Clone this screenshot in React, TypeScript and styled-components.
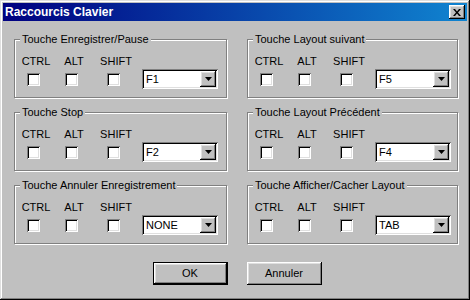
import React from "react";
import styled, { createGlobalStyle } from "styled-components";

const Global = createGlobalStyle`
  html, body { margin: 0; padding: 0; background: #c0c0c0; }
  body { font-family: "Liberation Sans", Arial, sans-serif; font-size: 11px; color: #000; }
  * { box-sizing: border-box; }
`;

const raised = `
  box-shadow: inset -1px -1px 0 #000, inset 1px 1px 0 #fff,
    inset -2px -2px 0 #808080, inset 2px 2px 0 #dfdfdf;
`;
const sunken = `
  box-shadow: inset 1px 1px 0 #808080, inset -1px -1px 0 #fff,
    inset 2px 2px 0 #000, inset -2px -2px 0 #dfdfdf;
`;

const Window = styled.div`
  width: 470px;
  height: 300px;
  background: #c0c0c0;
  padding: 3px;
  display: flex;
  flex-direction: column;
  box-shadow: inset -1px -1px 0 #000, inset 1px 1px 0 #dfdfdf,
    inset -2px -2px 0 #808080, inset 2px 2px 0 #fff;
`;

const TitleBar = styled.div`
  flex: none;
  height: 18px;
  background: linear-gradient(to right, #000080, #1084d0);
  display: flex;
  align-items: center;
  justify-content: space-between;
  padding: 0 2px;
`;

const Title = styled.span`
  color: #fff;
  font-weight: bold;
  font-size: 12px;
  line-height: 14px;
`;

const CloseButton = styled.div`
  width: 16px;
  height: 14px;
  background: #c0c0c0;
  display: flex;
  align-items: center;
  justify-content: center;
  ${raised}
`;

const Body = styled.div`
  flex: 1;
  display: flex;
  flex-direction: column;
  padding: 18px 9px 0 11px;
`;

const Columns = styled.div`
  display: grid;
  grid-template-columns: 213px 211px;
  column-gap: 20px;
`;

const Column = styled.div`
  display: flex;
  flex-direction: column;
  gap: 14px;
`;

const Group = styled.div`
  position: relative;
  height: 59px;
  border: 1px solid #808080;
  box-shadow: inset 1px 1px 0 #fff, 1px 1px 0 #fff;
  padding: 15px 0 0 2px;
`;

const Caption = styled.span`
  position: absolute;
  top: -7px;
  left: 5px;
  padding: 0 2px;
  background: #c0c0c0;
  line-height: 13px;
  white-space: nowrap;
`;

const Row = styled.div`
  display: flex;
  align-items: flex-end;
`;

const KeyCol = styled.div<{ $w: number }>`
  width: ${(p) => p.$w}px;
  display: flex;
  flex-direction: column;
  align-items: center;
  gap: 1px;
`;

const KeyLabel = styled.span`
  line-height: 13px;
  height: 13px;
`;

const BoxSlot = styled.div`
  height: 20px;
  display: flex;
  align-items: center;
`;

const Check = styled.div`
  width: 13px;
  height: 13px;
  background: #fff;
  margin-right: 5px;
  ${sunken}
`;

const Combo = styled.div`
  width: 76px;
  height: 20px;
  margin-left: 3px;
  background: #fff;
  display: flex;
  align-items: center;
  justify-content: space-between;
  padding: 2px 2px 2px 4px;
  ${sunken}
`;

const ComboText = styled.span`
  line-height: 13px;
`;

const DropButton = styled.div`
  width: 16px;
  height: 16px;
  background: #c0c0c0;
  display: flex;
  align-items: center;
  justify-content: center;
  ${raised}
`;

const Footer = styled.div`
  display: flex;
  justify-content: center;
  gap: 19px;
  margin-top: 18px;
  padding-left: 2px;
`;

const Button = styled.div<{ $default?: boolean }>`
  width: 75px;
  height: 23px;
  background: #c0c0c0;
  display: flex;
  align-items: center;
  justify-content: center;
  line-height: 13px;
  ${(p) =>
    p.$default
      ? `border: 1px solid #000; ${raised}`
      : raised}
`;

const Arrow = () => (
  <svg width="7" height="4" viewBox="0 0 7 4">
    <path d="M0 0h7L3.5 4z" fill="#000" />
  </svg>
);

const CloseIcon = () => (
  <svg width="8" height="7" viewBox="0 0 8 7">
    <path
      d="M0 0h2l2 2.5L6 0h2L5 3.5 8 7H6L4 4.5 2 7H0l3-3.5z"
      fill="#000"
    />
  </svg>
);

type Shortcut = { title: string; key: string };

const left: Shortcut[] = [
  { title: "Touche Enregistrer/Pause", key: "F1" },
  { title: "Touche Stop", key: "F2" },
  { title: "Touche Annuler Enregistrement", key: "NONE" },
];
const right: Shortcut[] = [
  { title: "Touche Layout suivant", key: "F5" },
  { title: "Touche Layout Précédent", key: "F4" },
  { title: "Touche Afficher/Cacher Layout", key: "TAB" },
];

const mods = [
  { name: "CTRL", w: 38 },
  { name: "ALT", w: 38 },
  { name: "SHIFT", w: 46 },
];

const ShortcutGroup = ({ s }: { s: Shortcut }) => (
  <Group>
    <Caption>{s.title}</Caption>
    <Row>
      {mods.map((m) => (
        <KeyCol key={m.name} $w={m.w}>
          <KeyLabel>{m.name}</KeyLabel>
          <BoxSlot>
            <Check />
          </BoxSlot>
        </KeyCol>
      ))}
      <Combo>
        <ComboText>{s.key}</ComboText>
        <DropButton>
          <Arrow />
        </DropButton>
      </Combo>
    </Row>
  </Group>
);

export default function App() {
  return (
    <>
      <Global />
      <Window>
        <TitleBar>
          <Title>Raccourcis Clavier</Title>
          <CloseButton>
            <CloseIcon />
          </CloseButton>
        </TitleBar>
        <Body>
          <Columns>
            <Column>
              {left.map((s) => (
                <ShortcutGroup key={s.title} s={s} />
              ))}
            </Column>
            <Column>
              {right.map((s) => (
                <ShortcutGroup key={s.title} s={s} />
              ))}
            </Column>
          </Columns>
          <Footer>
            <Button $default>OK</Button>
            <Button>Annuler</Button>
          </Footer>
        </Body>
      </Window>
    </>
  );
}
